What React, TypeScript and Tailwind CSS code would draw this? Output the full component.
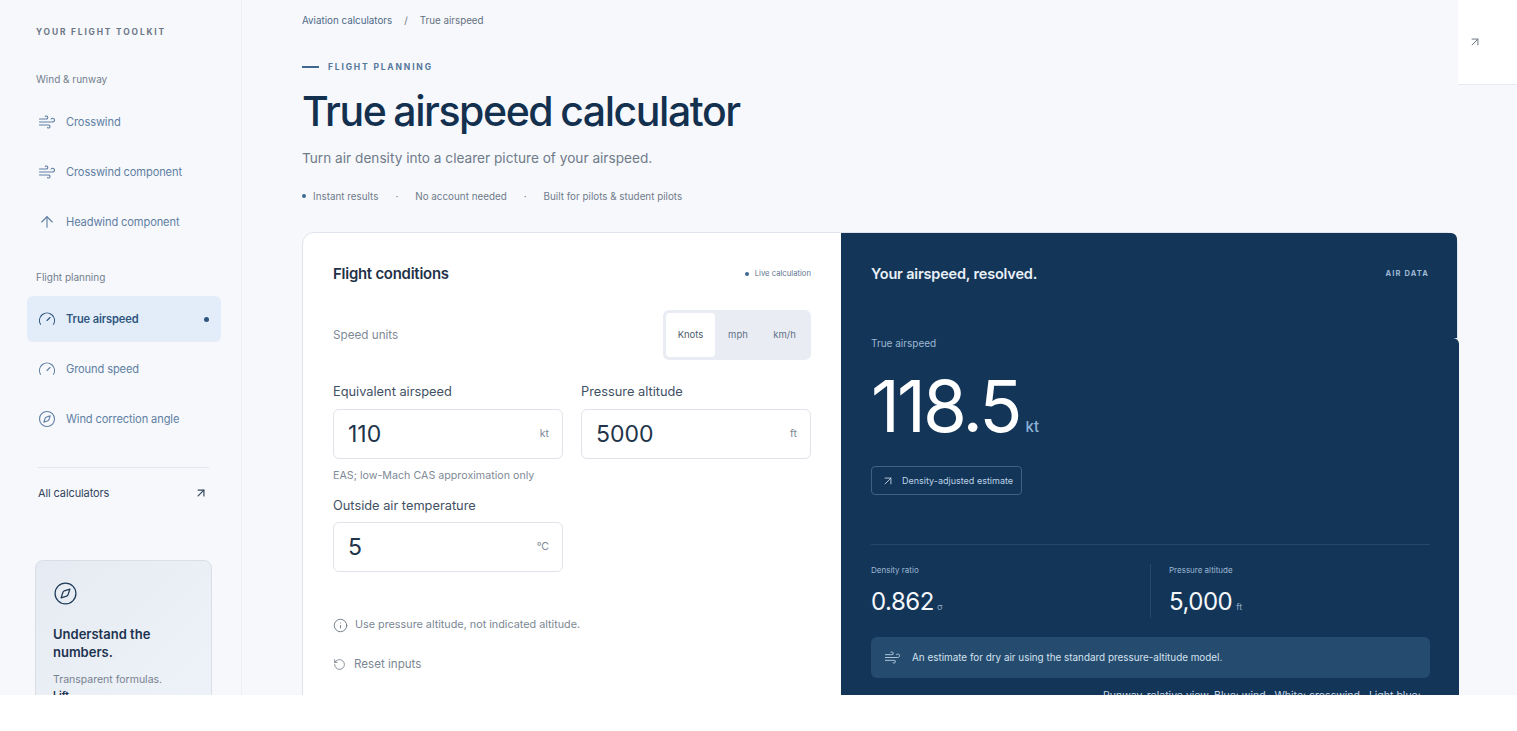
import { ArrowUp, ArrowUpRight, Compass, Gauge, Info, RotateCcw, Wind } from "lucide-react";
import type { ReactNode } from "react";

const NavItem = ({ icon, label, active }: { icon: ReactNode; label: string; active?: boolean }) => (
  <div
    className={`flex h-[46px] items-center rounded-md pl-[11px] pr-[12px] ${
      active ? "bg-[#e2edf9] font-semibold text-[#2f5580]" : "text-[#5f7fa3]"
    }`}
  >
    <span className="flex w-[28px] shrink-0">{icon}</span>
    <span className="flex-1 text-[11.1px] tracking-[-0.01em]">{label}</span>
    {active && <span className="size-[5px] rounded-full bg-[#2f5580]" />}
  </div>
);

const Field = ({ label, value, unit, className }: { label: string; value: string; unit: string; className?: string }) => (
  <div className={className}>
    <div className="text-[12.8px] leading-[18px] text-[#3f5064]">{label}</div>
    <div className="mt-[8px] flex h-[50px] items-center justify-between rounded-md border border-[#dfe4ea] bg-white pl-[14px] pr-[13px]">
      <span className="text-[23px] text-[#22344a]">{value}</span>
      <span className="text-[10.5px] text-[#7b8794]">{unit}</span>
    </div>
  </div>
);

export default function App() {
  return (
    <div className="flex h-[695px] overflow-hidden bg-[#f6f8fc] font-['Inter',sans-serif]">
      <aside className="w-[242px] shrink-0 border-r border-[#eceff4] pl-[27px] pr-[20px]">
        <div className="pl-[9px] pt-[26px] text-[8.4px] font-bold leading-[12px] tracking-[0.22em] text-[#6b7686]">
          YOUR FLIGHT TOOLKIT
        </div>
        <div className="mt-[34px] pl-[9px] text-[10px] leading-[14px] text-[#747f8d]">Wind &amp; runway</div>
        <div className="mt-[13px] flex flex-col gap-[4px]">
          <NavItem icon={<Wind size={18} strokeWidth={1.5} />} label="Crosswind" />
          <NavItem icon={<Wind size={18} strokeWidth={1.5} />} label="Crosswind component" />
          <NavItem icon={<ArrowUp size={18} strokeWidth={1.5} />} label="Headwind component" />
        </div>
        <div className="mt-[25px] pl-[9px] text-[10px] leading-[14px] text-[#747f8d]">Flight planning</div>
        <div className="mt-[12px] flex flex-col gap-[4px]">
          <NavItem active icon={<Gauge size={18} strokeWidth={1.5} />} label="True airspeed" />
          <NavItem icon={<Gauge size={18} strokeWidth={1.5} />} label="Ground speed" />
          <NavItem icon={<Compass size={18} strokeWidth={1.5} />} label="Wind correction angle" />
        </div>
        <div className="ml-[11px] mr-[12px] mt-[25px] border-t border-[#e2e6ec]" />
        <div className="ml-[11px] mr-[13px] mt-[17px] flex items-center justify-between text-[#33465c]">
          <span className="text-[11px] leading-[16px] tracking-[-0.01em]">All calculators</span>
          <ArrowUpRight size={14} strokeWidth={2} />
        </div>
        <div className="ml-[8px] mr-[9px] mt-[59px] h-[170px] rounded-lg border border-[#d9dfe7] bg-gradient-to-br from-[#e6ebf3] to-[#eff3f9] pl-[17px] pr-[12px] pt-[20px]">
          <Compass size={25} strokeWidth={1.2} className="text-[#1f3a57]" />
          <div className="mt-[19px] text-[13px] font-semibold leading-[18px] text-[#1d3350]">Understand the numbers.</div>
          <div className="mt-[11px] text-[10.5px] leading-[16px] text-[#77828f]">
            Transparent formulas.
            <br />
            <span className="font-semibold text-[#1d3350]">Lift</span>
          </div>
        </div>
      </aside>

      <main className="w-[1216px] shrink-0 pl-[60px]">
        <div className="flex gap-[12px] pt-[14px] text-[9.8px] leading-[14px] text-[#4f6a88]">
          <span>Aviation calculators</span>
          <span className="text-[#6b7686]">/</span>
          <span className="text-[#64707e]">True airspeed</span>
        </div>
        <div className="mt-[33px] flex items-center gap-[9px]">
          <span className="h-[1.5px] w-[17px] bg-[#3f678f]" />
          <span className="text-[8.5px] font-bold leading-[12px] tracking-[0.215em] text-[#55779b]">FLIGHT PLANNING</span>
        </div>
        <h1 className="mt-[13px] text-[41px] font-medium leading-[50px] tracking-[-0.035em] [word-spacing:-1.5px] text-[#14304f]">
          True airspeed calculator
        </h1>
        <p className="mt-[12px] text-[13.65px] leading-[20px] text-[#707b89]">Turn air density into a clearer picture of your airspeed.</p>
        <div className="mt-[21px] flex items-center text-[9.85px] leading-[14px] text-[#707b89]">
          <span className="mr-[7px] size-[4px] rounded-full bg-[#3f678f]" />
          <span>Instant results</span>
          <span className="mx-[17px]">·</span>
          <span>No account needed</span>
          <span className="mx-[17px]">·</span>
          <span>Built for pilots &amp; student pilots</span>
        </div>

        <div className="mt-[29px] flex h-[600px] rounded-t-xl border border-[#dfe4ea] bg-white">
          <section className="w-[538px] shrink-0 px-[30px]">
            <div className="flex items-center justify-between pt-[30px]">
              <h2 className="text-[14.9px] font-semibold leading-[22px] tracking-[-0.015em] text-[#1f3248]">Flight conditions</h2>
              <div className="flex items-center gap-[6px] text-[7.7px] text-[#5f7590]">
                <span className="size-[4px] rounded-full bg-[#3f678f]" />
                Live calculation
              </div>
            </div>
            <div className="mt-[25px] flex items-center justify-between">
              <span className="pt-[1px] text-[11.7px] text-[#808a96]">Speed units</span>
              <div className="flex h-[50px] w-[148px] rounded-md bg-[#e9edf3] p-[3px] text-[9.5px] text-[#5f7088]">
                <span className="flex w-[49px] items-center justify-center rounded bg-white text-[#4d5a69]">Knots</span>
                <span className="flex w-[46px] items-center justify-center">mph</span>
                <span className="flex w-[47px] items-center justify-center">km/h</span>
              </div>
            </div>
            <div className="mt-[23px] grid grid-cols-2 gap-x-[18px]">
              <Field label="Equivalent airspeed" value="110" unit="kt" />
              <Field label="Pressure altitude" value="5000" unit="ft" />
            </div>
            <div className="mt-[9px] text-[10.7px] leading-[16px] text-[#808a96]">EAS; low-Mach CAS approximation only</div>
            <Field label="Outside air temperature" value="5" unit="°C" className="mt-[13px] w-[230px] [&>div+div]:mt-[7px]" />
            <div className="mt-[44px] flex items-center gap-[7px] text-[10.8px] leading-[18px] text-[#7b8794]">
              <Info size={15} strokeWidth={1.3} className="text-[#5b6673]" />
              Use pressure altitude, not indicated altitude.
            </div>
            <div className="mt-[21px] flex items-center gap-[8px] text-[11.6px] leading-[18px] text-[#7b8794]">
              <RotateCcw size={13} strokeWidth={1.3} className="text-[#5b6673]" />
              Reset inputs
            </div>
          </section>

          <section className="min-w-0 flex-1">
            <div className="flex h-[105px] items-start justify-between rounded-tr-md bg-[#133558] pl-[30px] pr-[28px] pt-[30px]">
              <h2 className="text-[14.5px] font-semibold leading-[22px] tracking-[-0.012em] text-[#e9f0f7]">Your airspeed, resolved.</h2>
              <span className="pt-[5px] text-[7.5px] font-bold leading-[12px] tracking-[0.15em] text-[#9db8d3]">AIR DATA</span>
            </div>
            <div className="-mr-[2px] h-[495px] rounded-tr-md bg-[#133558] pl-[30px] pr-[30px]">
              <div className="text-[10px] leading-[10px] text-[#9db8d3]">True airspeed</div>
              <div className="mt-[15px] flex items-baseline">
                <span className="text-[71px] font-normal leading-[86px] tracking-[-0.04em] text-white">118.5</span>
                <span className="ml-[6px] text-[15px] font-medium text-[#8db4d9]">kt</span>
              </div>
              <div className="mt-[17px] flex h-[29px] w-[151px] items-center gap-[7px] rounded border border-[#3d6285] pl-[9px] text-[9px] text-[#bcd2e6]">
                <ArrowUpRight size={14} strokeWidth={1.4} className="text-[#d5e3f0]" />
                Density-adjusted estimate
              </div>
              <div className="mr-[-1px] mt-[49px] border-t border-[#25496b]" />
              <div className="mt-[19px] flex h-[54px]">
                <div className="w-[280px] border-r border-[#25496b]">
                  <div className="text-[8px] leading-[12px] text-[#9db8d3]">Density ratio</div>
                  <div className="mt-[9px] flex items-baseline gap-[3px]">
                    <span className="text-[24px] leading-[34px] tracking-[-0.02em] text-[#f3f7fb]">0.862</span>
                    <span className="text-[9px] text-[#8fa9c4]">σ</span>
                  </div>
                </div>
                <div className="pl-[18px]">
                  <div className="text-[8px] leading-[12px] text-[#9db8d3]">Pressure altitude</div>
                  <div className="mt-[9px] flex items-baseline gap-[4px]">
                    <span className="text-[24px] leading-[34px] tracking-[-0.02em] text-[#f3f7fb]">5,000</span>
                    <span className="text-[9px] text-[#8fa9c4]">ft</span>
                  </div>
                </div>
              </div>
              <div className="mr-[-1px] mt-[19px] flex h-[41px] items-center gap-[11px] rounded-md bg-[#254b6e] pl-[13px] text-[9.9px] text-[#d4e2ef]">
                <Wind size={17} strokeWidth={1.3} className="text-[#b9cfe3]" />
                An estimate for dry air using the standard pressure-altitude model.
              </div>
              <div className="mt-[10px] pl-[232px] text-[10.5px] leading-[16px] text-[#c7d8e8]">
                Runway-relative view. Blue: wind · White: crosswind · Light blue:
              </div>
            </div>
          </section>
        </div>
      </main>

      <div className="flex-1">
        <div className="flex h-[85px] items-center border-b border-[#e6e9f2] bg-white pl-[10px]">
          <ArrowUpRight size={14} strokeWidth={1.7} className="text-[#6d7681]" />
        </div>
      </div>
    </div>
  );
}
